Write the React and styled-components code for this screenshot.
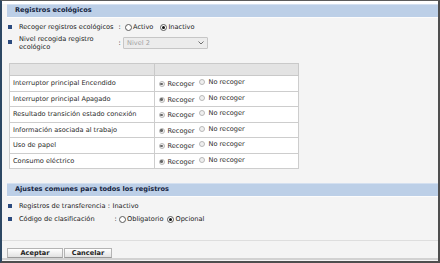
import React from 'react';
import styled, { createGlobalStyle } from 'styled-components';

const Global = createGlobalStyle`
  html, body { margin: 0; padding: 0; background: #ffffff; }
  body {
    font-family: "DejaVu Sans", Verdana, sans-serif;
    font-size: 6.6px;
    color: #1a1a1a;
  }
`;

const Frame = styled.div`
  box-sizing: border-box;
  width: 440px;
  height: 263px;
  border-top: 1px solid #5c5c5c;
  border-left: 2px solid #2c4763;
  border-right: 2px solid #4e4e4e;
  border-bottom: 2px solid #4e4e4e;
  background: linear-gradient(#ffffff 0 3px, #f4f4f4 3px);
  padding: 3px 0 0 5px;
  display: flex;
  flex-direction: column;
`;

const SectionHeader = styled.div`
  box-sizing: border-box;
  height: 13px;
  margin-top: ${p => p.$top || 0}px;
  background: #bccfe7;
  border-top: 1px solid #d4e0f0;
  box-shadow: 0 1px 0 #fcfcfc;
  padding-left: 8px;
  line-height: 11px;
  font-weight: bold;
  color: #16253f;
`;

const FieldList = styled.div`
  display: flex;
  flex-direction: column;
  gap: 3px;
  margin-top: 5px;
`;

const Field = styled.div`
  display: flex;
  align-items: center;
  min-height: 10px;
`;

const Bullet = styled.span`
  flex: none;
  width: 4px;
  height: 4px;
  background: #2b4a7e;
  margin: 0 7px 0 1px;
  align-self: ${p => (p.$top ? 'flex-start' : 'center')};
  margin-top: ${p => (p.$top ? '5px' : '0')};
`;

const Label = styled.span`
  flex: none;
  width: ${p => (p.$w ? `${p.$w}px` : 'auto')};
  line-height: 8px;
  color: #1a1a1a;
`;

const Colon = styled.span`
  flex: none;
  width: ${p => p.$w || 7}px;
  text-align: center;
`;

const Value = styled.span`
  display: flex;
  align-items: center;
  margin-left: ${p => p.$ml || 0}px;
`;

const RadioItem = styled.label`
  display: inline-flex;
  align-items: center;
  margin-right: ${p => p.$mr || 0}px;
  color: ${p => (p.$muted ? '#2a2a2a' : '#1a1a1a')};
`;

const RadioDot = styled.span`
  box-sizing: border-box;
  flex: none;
  width: ${p => p.$size}px;
  height: ${p => p.$size}px;
  border-radius: 50%;
  border: 1px solid ${p => (p.$muted ? '#b9b9b9' : '#5a5a5a')};
  background: ${p => (p.$muted ? '#efefef' : '#ffffff')};
  margin-right: ${p => (p.$muted ? 3 : 1)}px;
  display: flex;
  align-items: center;
  justify-content: center;
  &::after {
    content: '';
    width: ${p => (p.$muted ? 2.5 : 3)}px;
    height: ${p => (p.$muted ? 2.5 : 3)}px;
    border-radius: 50%;
    background: ${p => (p.$muted ? '#666' : '#111')};
    display: ${p => (p.$checked ? 'block' : 'none')};
  }
`;

const Radio = ({ checked, muted, label, mr }) => (
  <RadioItem $mr={mr} $muted={muted}>
    <RadioDot $size={muted ? 6 : 7} $checked={checked} $muted={muted} />
    {label}
  </RadioItem>
);

const SelectBox = styled.div`
  box-sizing: border-box;
  width: 85px;
  height: 12px;
  border: 1px solid #c6c6c6;
  border-radius: 1px;
  background: #ececec;
  color: #a3a3a3;
  display: flex;
  align-items: center;
  justify-content: space-between;
  padding: 0 3px 0 3px;
`;

const Table = styled.table`
  border-collapse: collapse;
  width: 290px;
  margin: 12px 0 0 2px;
  table-layout: fixed;
  border: 1px solid #c4c4c4;
`;

const HeadCell = styled.th`
  height: 11px;
  padding: 0;
  background: #e3e3e3;
  border: 1px solid #c9c9c9;
`;

const Cell = styled.td`
  box-sizing: border-box;
  height: 15.5px;
  padding: 0 0 0 ${p => p.$pl || 3}px;
  background: #ffffff;
  border: 1px solid #cdcdcd;
  color: #2a2a2a;
  white-space: nowrap;
`;

const Footer = styled.div`
  margin: auto 0 1px -5px;
  padding: 7px 0 0 5px;
  border-top: 1px solid #dedede;
  border-bottom: 2px solid #d2d2d2;
  display: flex;
`;

const Button = styled.button`
  box-sizing: border-box;
  width: ${p => p.$w}px;
  height: 10px;
  margin: 0 1px 0 0;
  padding: 0;
  border: 1px solid #b4b4b4;
  border-bottom-color: #9a9a9a;
  background: linear-gradient(#ffffff, #e2e2e2);
  font-family: inherit;
  font-size: 6.6px;
  font-weight: bold;
  color: #1e1e1e;
  line-height: 8px;
`;

const rows = [
  'Interruptor principal Encendido',
  'Interruptor principal Apagado',
  'Resultado transición estado conexión',
  'Información asociada al trabajo',
  'Uso de papel',
  'Consumo eléctrico',
];

export default function App() {
  return (
    <>
      <Global />
      <Frame>
        <SectionHeader>Registros ecológicos</SectionHeader>
        <FieldList>
          <Field>
            <Bullet />
            <Label $w={97}>Recoger registros ecológicos</Label>
            <Colon>:</Colon>
            <Value $ml={2}>
              <Radio label="Activo" mr={7} />
              <Radio label="Inactivo" checked />
            </Value>
          </Field>
          <Field>
            <Bullet $top />
            <Label $w={97}>Nivel recogida registro ecológico</Label>
            <Colon>:</Colon>
            <SelectBox>
              <span>Nivel 2</span>
              <svg width="6" height="4" viewBox="0 0 6 4">
                <polyline points="0.5,0.5 3,3 5.5,0.5" fill="none" stroke="#6e6e6e" strokeWidth="1" />
              </svg>
            </SelectBox>
          </Field>
        </FieldList>
        <Table>
          <thead>
            <tr>
              <HeadCell />
              <HeadCell />
            </tr>
          </thead>
          <tbody>
            {rows.map(r => (
              <tr key={r}>
                <Cell>{r}</Cell>
                <Cell $pl={4}>
                  <Radio muted checked label="Recoger" mr={5} />
                  <Radio muted label="No recoger" />
                </Cell>
              </tr>
            ))}
          </tbody>
        </Table>
        <SectionHeader $top={14}>Ajustes comunes para todos los registros</SectionHeader>
        <FieldList>
          <Field>
            <Bullet />
            <Label>Registros de transferencia</Label>
            <Colon $w={7}>:</Colon>
            <span>Inactivo</span>
          </Field>
          <Field>
            <Bullet />
            <Label $w={93}>Código de clasificación</Label>
            <Colon>:</Colon>
            <Value>
              <Radio label="Obligatorio" mr={4} />
              <Radio label="Opcional" checked />
            </Value>
          </Field>
        </FieldList>
        <Footer>
          <Button $w={56}>Aceptar</Button>
          <Button $w={48}>Cancelar</Button>
        </Footer>
      </Frame>
    </>
  );
}
